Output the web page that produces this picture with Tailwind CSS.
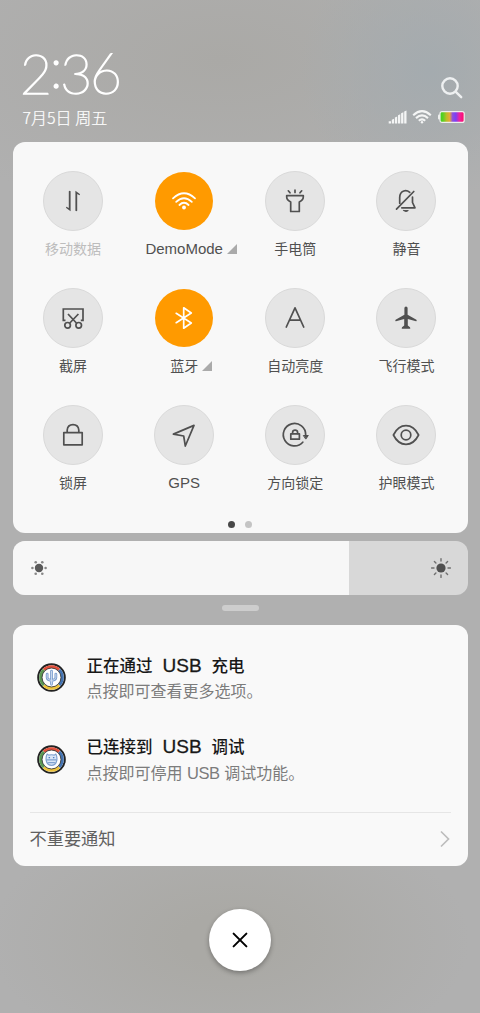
<!DOCTYPE html>
<html lang="zh-CN">
<head>
<meta charset="utf-8">
<title>控制中心</title>
<script src="https://cdn.jsdelivr.net/npm/@tailwindcss/browser@4"></script>
</head>
<body class="w-[480px] h-[1013px] overflow-hidden bg-[#b0b0b0] bg-[radial-gradient(ellipse_130px_130px_at_430px_70px,#a4abaf_0%,#a4abaf00_100%),radial-gradient(ellipse_330px_160px_at_220px_60px,#aaa9a6_0%,#aaa9a600_100%),radial-gradient(ellipse_240px_130px_at_230px_940px,#aaa9a5_20%,#aaa9a500_100%)] font-['Liberation_Sans','Noto_Sans_CJK_SC',sans-serif] flex flex-col px-[12.5px]">

<header class="h-[142px] shrink-0 flex justify-between pl-[10px] pr-[2px] text-white">
  <div class="flex flex-col pt-[43px]">
    <div class="-ml-[2.5px] font-['Lato'] font-thin text-[55px] leading-[60px] h-[60px] tracking-[-2.2px] whitespace-nowrap [-webkit-text-stroke:1.5px_white]">2<span class="relative -top-[6px]">:</span>36</div>
    <div class="font-['Noto_Sans_CJK_SC'] font-light text-[16px] leading-[24px] mt-[1.5px] whitespace-nowrap [-webkit-text-stroke:0.2px_white]">7月5日 周五</div>
  </div>
  <div class="flex flex-col items-end pt-[76px]">
    <svg class="w-[24px] h-[24px] mr-[2px]" viewBox="0 0 24 24" fill="none" stroke="#eef0f1" stroke-width="2.4" stroke-linecap="round"><circle cx="10" cy="10" r="7.7"/><path d="M15.8 15.8L21.2 21.2"/></svg>
    <div class="flex items-center mt-[9px] h-[16px]">
      <svg class="w-[20px] h-[14px]" viewBox="0 0 20 14" fill="#f4f5f5"><path d="M.7 11.3h2.3v2.2H.7zM3.800 9.700l2.300-1v4.800H3.800zM6.900 7.500l2.300-1v7H6.900zM10 5.300l2.300-1v9.200H10zM13.100 3.200l2.300-1v11.300h-2.300zM16.200 1.500l2.300-1v13h-2.300z"/></svg>
      <svg class="w-[20px] h-[14px] ml-[4px]" viewBox="0 0 20 14" fill="none" stroke="#f4f5f5" stroke-width="2.1"><path d="M1.2 5.2Q10-2.8 18.8 5.2M4 8.1Q10 2.7 16 8.1M6.8 10.8Q10 8 13.2 10.8"/><circle cx="10" cy="12.2" r="1.2" fill="#f4f5f5" stroke="none"/></svg>
      <svg class="w-[28px] h-[14px] ml-[6px]" viewBox="0 0 28 14"><defs><linearGradient id="bat"><stop offset="0" stop-color="#3ecf1c"/><stop offset=".13" stop-color="#5ccf24"/><stop offset=".27" stop-color="#b9bd26"/><stop offset=".4" stop-color="#e9a638"/><stop offset=".52" stop-color="#8b50df"/><stop offset=".65" stop-color="#7a40f4"/><stop offset=".8" stop-color="#ee229f"/><stop offset="1" stop-color="#ff0766"/></linearGradient></defs><rect x="0" y="4.6" width="3" height="4.8" rx="1" fill="#eee"/><rect x="2" y="1.600" width="24.200" height="10.800" rx="2" fill="url(#bat)" stroke="#eee" stroke-width="1.2"/></svg>
    </div>
  </div>
</header>

<section class="h-[391px] shrink-0 rounded-[12px] bg-[#f8f8f8] flex flex-col items-center pt-[28.5px] text-[14px] text-[#505050]">
  <div class="grid grid-cols-[repeat(4,111.1px)] auto-rows-[117.3px] -ml-[0.5px]">
    <div class="flex flex-col items-center">
      <div class="size-[60px] rounded-full bg-[#e5e5e5] border border-[#d9d9d9] flex items-center justify-center"><svg class="size-[30px]" viewBox="0 0 30 30" fill="#505050"><path d="M10.8 5.2q.9-.8 1.8 0v20l-4.4-3.3q-.5-1.2.7-1l1.9 1zM17.4 24.8q.9.8 1.8 0V8.1l1.9 1q1.2.2.7-1L17.4 4.8z"/></svg></div>
      <div class="mt-[8px] h-[20px] leading-[20px] text-[#bdbdbd] whitespace-nowrap">移动数据</div>
    </div>
    <div class="flex flex-col items-center">
      <div class="size-[58px] my-px rounded-full bg-[#ff9a00] flex items-center justify-center"><svg class="size-[30px]" viewBox="0 0 30 30" fill="none" stroke="#fff" stroke-width="1.8" stroke-linecap="round"><path d="M4 12.3Q15 2.3 26 12.3M7.2 15.8Q15 8.6 22.8 15.8M10.4 19Q15 14.6 19.6 19"/><circle cx="15" cy="21.5" r="1.9" fill="#fff" stroke="none"/></svg></div>
      <div class="relative mt-[8px] h-[20px] leading-[20px] text-[15px] whitespace-nowrap">DemoMode<svg class="absolute left-full ml-[4px] top-[5px] size-[10px]" viewBox="0 0 10 10" fill="#aaa"><path d="M10 0v10H0z"/></svg></div>
    </div>
    <div class="flex flex-col items-center">
      <div class="size-[60px] rounded-full bg-[#e5e5e5] border border-[#d9d9d9] flex items-center justify-center"><svg class="size-[30px]" viewBox="0 0 30 30" fill="none" stroke="#505050" stroke-width="1.7" stroke-linecap="round" stroke-linejoin="round"><path d="M6.700 9.600H23.300V11Q23.300 14 19.300 16V25.500H10.700V16Q6.700 14 6.700 11ZM15 4.200V6.500M8.300 4.800L10 6.800M21.700 4.800L20 6.800"/></svg></div>
      <div class="mt-[8px] h-[20px] leading-[20px] whitespace-nowrap">手电筒</div>
    </div>
    <div class="flex flex-col items-center">
      <div class="size-[60px] rounded-full bg-[#e5e5e5] border border-[#d9d9d9] flex items-center justify-center"><svg class="size-[30px]" viewBox="0 0 30 30" fill="none" stroke="#505050" stroke-width="1.7" stroke-linecap="round" stroke-linejoin="round"><path d="M22.800 5.500L5.500 23.200M18.800 6.300Q15.800 4 12.800 5Q8.700 6.500 8.700 11.500V17.200M21.500 11V16.500L24 21.800H10.800"/><path d="M12.7 24.6H17.3Q15 26.600 12.7 24.6Z" fill="#505050" stroke-width="1"/></svg></div>
      <div class="mt-[8px] h-[20px] leading-[20px] whitespace-nowrap">静音</div>
    </div>
    <div class="flex flex-col items-center">
      <div class="size-[60px] rounded-full bg-[#e5e5e5] border border-[#d9d9d9] flex items-center justify-center"><svg class="size-[30px]" viewBox="0 0 30 30" fill="none" stroke="#505050" stroke-width="1.7"><path d="M7.5 17.3H5.3V6H25V17.3H22.8M10 11L18.4 20M20.4 11L11.8 20"/><circle cx="9.6" cy="22.3" r="2.8"/><circle cx="20.7" cy="22.3" r="2.8"/></svg></div>
      <div class="mt-[8px] h-[20px] leading-[20px] whitespace-nowrap">截屏</div>
    </div>
    <div class="flex flex-col items-center">
      <div class="size-[58px] my-px rounded-full bg-[#ff9a00] flex items-center justify-center"><svg class="size-[30px]" viewBox="0 0 30 30" fill="none" stroke="#fff" stroke-width="1.7" stroke-linejoin="round" stroke-linecap="round"><path d="M7.2 10.3L22.3 20L14.7 25.2V4.8L22.3 10L7.2 19.7"/></svg></div>
      <div class="relative mt-[8px] h-[20px] leading-[20px] whitespace-nowrap">蓝牙<svg class="absolute left-full ml-[4px] top-[5px] size-[10px]" viewBox="0 0 10 10" fill="#aaa"><path d="M10 0v10H0z"/></svg></div>
    </div>
    <div class="flex flex-col items-center">
      <div class="size-[60px] rounded-full bg-[#e5e5e5] border border-[#d9d9d9] flex items-center justify-center"><svg class="size-[30px]" viewBox="0 0 30 30" fill="none" stroke="#505050" stroke-width="1.7" stroke-linecap="round" stroke-linejoin="round"><path d="M6.3 24L15 4.8L23.7 24M9.6 17.2H20.4"/></svg></div>
      <div class="mt-[8px] h-[20px] leading-[20px] whitespace-nowrap">自动亮度</div>
    </div>
    <div class="flex flex-col items-center">
      <div class="size-[60px] rounded-full bg-[#e5e5e5] border border-[#d9d9d9] flex items-center justify-center"><svg class="size-[30px]" viewBox="0 0 30 30" fill="#505050"><path d="M13.4 5Q13.5 3.4 15 3.4T16.6 5V11.8L25.4 16.7Q26.3 18.3 25 18.2L16.8 16V22.6L19 24.2Q19.8 25.7 18.8 25.7H11.2Q10.2 25.7 11 24.2L13.2 22.6V16L5 18.2Q3.7 18.3 4.6 16.7L13.4 11.8Z"/></svg></div>
      <div class="mt-[8px] h-[20px] leading-[20px] whitespace-nowrap">飞行模式</div>
    </div>
    <div class="flex flex-col items-center">
      <div class="size-[60px] rounded-full bg-[#e5e5e5] border border-[#d9d9d9] flex items-center justify-center"><svg class="size-[30px]" viewBox="0 0 30 30" fill="none" stroke="#505050" stroke-width="1.7" stroke-linejoin="round"><rect x="5.8" y="12.6" width="18.4" height="12.2"/><path d="M9.2 12.6V10Q9.7 4.6 15 4.6T20.8 10V12.6"/></svg></div>
      <div class="mt-[8px] h-[20px] leading-[20px] whitespace-nowrap">锁屏</div>
    </div>
    <div class="flex flex-col items-center">
      <div class="size-[60px] rounded-full bg-[#e5e5e5] border border-[#d9d9d9] flex items-center justify-center"><svg class="size-[30px]" viewBox="0 0 30 30" fill="none" stroke="#505050" stroke-width="1.7" stroke-linejoin="round"><path d="M25 5.4L16.3 26L14.7 16L4.4 14.1Z"/></svg></div>
      <div class="mt-[8px] h-[20px] leading-[20px] text-[15px] whitespace-nowrap">GPS</div>
    </div>
    <div class="flex flex-col items-center">
      <div class="size-[60px] rounded-full bg-[#e5e5e5] border border-[#d9d9d9] flex items-center justify-center"><svg class="size-[30px]" viewBox="0 0 30 30" fill="none" stroke="#505050" stroke-width="1.7" stroke-linecap="round"><path d="M22.8 22.2A11.2 11.2 0 1 1 25.7 15"/><path d="M23.7 15.5H28.3L26 18.8Z" fill="#505050" stroke-width="1" stroke-linejoin="round"/><rect x="10.8" y="13.8" width="8.6" height="5.4" stroke-linejoin="round"/><path d="M12.6 13.4V12.3Q12.8 10.2 15.1 10.2T17.6 12.3V13.4"/></svg></div>
      <div class="mt-[8px] h-[20px] leading-[20px] whitespace-nowrap">方向锁定</div>
    </div>
    <div class="flex flex-col items-center">
      <div class="size-[60px] rounded-full bg-[#e5e5e5] border border-[#d9d9d9] flex items-center justify-center"><svg class="size-[30px]" viewBox="0 0 30 30" fill="none" stroke="#505050" stroke-width="1.7"><path d="M2.4 15Q7 5.7 15 5.7T27.6 15Q23 24.3 15 24.3T2.4 15Z" stroke-linejoin="round"/><circle cx="15" cy="15" r="4.8"/></svg></div>
      <div class="mt-[8px] h-[20px] leading-[20px] whitespace-nowrap">护眼模式</div>
    </div>
  </div>
  <div class="flex gap-[10.5px] -mt-px">
    <div class="size-[7px] rounded-full bg-[#484848]"></div>
    <div class="size-[7px] rounded-full bg-[#c4c4c4]"></div>
  </div>
</section>

<section class="mt-[8px] h-[53.5px] shrink-0 rounded-[12px] overflow-hidden bg-[#d8d8d8] flex">
  <div class="w-[336.5px] bg-[#f7f7f7] flex items-center pl-[17.5px]">
    <svg class="size-[18px]" viewBox="0 0 18 18" fill="#888"><circle cx="9" cy="9" r="4.2" fill="#5a5a5a"/><circle cx="2.4" cy="9" r="1.3"/><circle cx="15.6" cy="9" r="1.3"/><circle cx="5.7" cy="3.3" r="1.3"/><circle cx="12.3" cy="3.3" r="1.3"/><circle cx="5.7" cy="14.7" r="1.3"/><circle cx="12.3" cy="14.7" r="1.3"/></svg>
  </div>
  <div class="flex-1 flex items-center justify-end pr-[15.5px]">
    <svg class="size-[22px]" viewBox="0 0 22 22" stroke="#707070" stroke-width="1.4" stroke-linecap="round"><circle cx="11" cy="11" r="4.6" fill="#505050" stroke="none"/><path d="M11 1.6v2.4M11 18v2.4M1.6 11H4M18 11h2.4M4.4 4.4l1.5 1.5M16.1 16.1l1.5 1.5M17.6 4.4l-1.5 1.5M5.9 16.1l-1.5 1.5"/></svg>
  </div>
</section>

<div class="mt-[10.5px] w-[37px] h-[6px] shrink-0 rounded-full bg-[#cdcdcd] self-center"></div>

<section class="mt-[14px] h-[241px] shrink-0 rounded-[12px] bg-[#f9f9f9] px-[17px] flex flex-col">
  <div class="flex h-[81px] pt-[29px]">
    <svg class="size-[29px] ml-[7.5px] mt-[9px]" viewBox="0 0 30 30" fill="none"><circle cx="15" cy="15" r="13.8" fill="#fff" stroke="#222" stroke-width="2"/><g stroke-width="2.9"><path d="M7 7A11.4 11.4 0 0 1 23 7" stroke="#e2513d"/><path d="M23 7A11.4 11.4 0 0 1 23 23" stroke="#4373b2"/><path d="M23 23A11.4 11.4 0 0 1 7 23" stroke="#edc33c"/><path d="M7 23A11.4 11.4 0 0 1 7 7" stroke="#5b9852"/></g><circle cx="15" cy="15" r="9.8" stroke="#333" stroke-width=".9"/><g stroke="#7fa1d0" stroke-linecap="round"><path d="M15 8.500V22M10.500 11.500v3.500q0 2.500 4.500 3.200q4.500-.700 4.500-3.200v-3.500" stroke-width="2.900"/><path d="M15 8.500V22M10.500 11.500v3.500q0 2.500 4.500 3.200q4.500-.700 4.500-3.200v-3.500" stroke="#d3e0f2" stroke-width=".9"/></g></svg>
    <div class="ml-[20.5px]">
      <div class="text-[16.5px] leading-[24px] font-medium text-[#181818] whitespace-nowrap flex gap-[10px]"><span>正在通过</span><span class="text-[19px] [-webkit-text-stroke:0.3px_#181818]">USB</span><span>充电</span></div>
      <div class="text-[16px] leading-[24px] mt-[2px] text-[#7c7c7c] whitespace-nowrap">点按即可查看更多选项。</div>
    </div>
  </div>
  <div class="flex h-[106px] pt-[29px]">
    <svg class="size-[29px] ml-[7.5px] mt-[9.5px]" viewBox="0 0 30 30" fill="none"><circle cx="15" cy="15" r="13.8" fill="#fff" stroke="#222" stroke-width="2"/><g stroke-width="2.9"><path d="M7 7A11.4 11.4 0 0 1 23 7" stroke="#e2513d"/><path d="M23 7A11.4 11.4 0 0 1 23 23" stroke="#4373b2"/><path d="M23 23A11.4 11.4 0 0 1 7 23" stroke="#edc33c"/><path d="M7 23A11.4 11.4 0 0 1 7 7" stroke="#5b9852"/></g><circle cx="15" cy="15" r="9.8" stroke="#333" stroke-width=".9"/><path d="M10.500 9.300l1.500 1.200Q15 9.700 18 10.500l1.500-1.200Q21 12 20.500 16Q19.500 21 15 21T9.500 16Q9 12 10.500 9.300Z" fill="#dbe7f7" stroke="#7fa1d0" stroke-width="1.200" stroke-linejoin="round"/><path d="M9.700 15.500H20.300M11.500 18.300H18.500" stroke="#7fa1d0" stroke-width="1.300"/><path d="M12 13h1.500M16.500 13H18" stroke="#4e7fc4" stroke-width="1.300"/></svg>
    <div class="ml-[20.5px]">
      <div class="text-[16.5px] leading-[24px] font-medium text-[#181818] whitespace-nowrap flex gap-[10px]"><span>已连接到</span><span class="text-[19px] [-webkit-text-stroke:0.3px_#181818]">USB</span><span>调试</span></div>
      <div class="text-[16px] leading-[24px] mt-[1.5px] text-[#7c7c7c] whitespace-nowrap">点按即可停用 <span class="text-[16.5px] tracking-[-0.4px]">USB</span> 调试功能。</div>
    </div>
  </div>
  <div class="h-[53px] border-t border-[#e6e6e6] flex items-center justify-between text-[17.2px] text-[#606060]">
    <span class="pt-[2px]">不重要通知</span>
    <svg class="w-[10px] h-[18px] mr-px" viewBox="0 0 10 18" fill="none" stroke="#bdbdbd" stroke-width="1.7"><path d="M1 1.500L8.500 9L1 16.500"/></svg>
  </div>
</section>

<button class="mt-[43px] size-[62px] shrink-0 rounded-full bg-white self-center flex items-center justify-center shadow-[0_2px_5px_rgba(0,0,0,0.32)]">
  <svg class="size-[16px]" viewBox="0 0 16 16" stroke="#000" stroke-width="2" stroke-linecap="round"><path d="M1.600 1.600L14.400 14.400M14.400 1.600L1.600 14.400"/></svg>
</button>
</body>
</html>
